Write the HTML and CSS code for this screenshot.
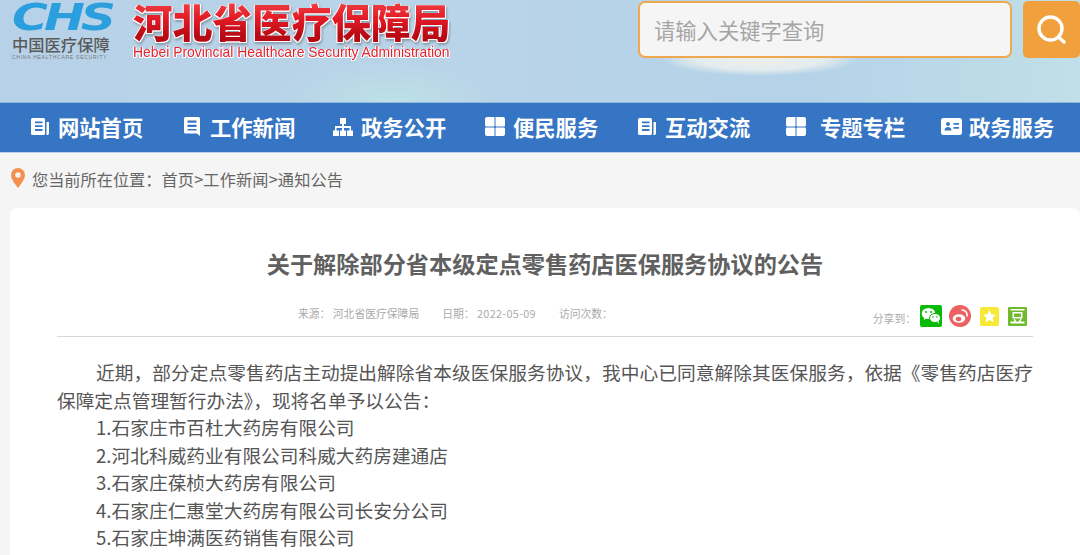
FILE: index.html
```html
<!DOCTYPE html>
<html lang="zh-CN">
<head>
<meta charset="utf-8">
<title>河北省医疗保障局</title>
<link rel="stylesheet" href="styles.css">
</head>
<body>
<header class="header">
  <div class="logo">
    <div class="logo-chs">CHS</div>
    <div class="logo-cn">中国医疗保障</div>
    <div class="logo-en">CHINA HEALTHCARE SECURITY</div>
  </div>
  <div class="brand">
    <div class="brand-cn">河北省医疗保障局</div>
    <div class="brand-en">Hebei Provincial Healthcare Security Administration</div>
  </div>
  <div class="search">
    <div class="search-input">请输入关键字查询</div>
    <div class="search-btn">
      <svg width="34" height="34" viewBox="0 0 34 34"><circle cx="15.500" cy="15.500" r="11.500" fill="none" stroke="#fff" stroke-width="3.400"/><path d="M24 24.500l5 4.500" stroke="#fff" stroke-width="3.400" stroke-linecap="round"/></svg>
    </div>
  </div>
</header>
<nav class="nav">
  <a class="nav-item"><span class="nav-ic"><svg width="18" height="17" viewBox="0 0 18 17"><path fill="#fff" fill-rule="evenodd" d="M1.500 0h11A1.500 1.500 0 0 1 14 1.500v14a1.500 1.500 0 0 1-1.500 1.500h-11A1.500 1.500 0 0 1 0 15.500v-14A1.500 1.500 0 0 1 1.500 0zM4 3.500v1.800h7.500V3.500zm0 3.800v1.800h7.500V7.300zm0 3.800v1.800h7.500v-1.800z"/><path fill="#fff" d="M15.500 4H18v11a2 2 0 0 1-2.500 2z"/></svg></span>网站首页</a>
  <a class="nav-item nav-item-tight"><span class="nav-ic"><svg width="16" height="19" viewBox="0 0 16 19"><path fill="#fff" fill-rule="evenodd" d="M1.500 0h13A1.500 1.500 0 0 1 16 1.500V19l-3-2.500H1.500A1.500 1.500 0 0 1 0 15V1.500A1.500 1.500 0 0 1 1.500 0zM3.500 3.500v2.200h9V3.500zm0 4.300V10h9V7.800zm0 4.200v1.500h9V12z"/></svg></span>工作新闻</a>
  <a class="nav-item nav-item-mid"><span class="nav-ic"><svg width="20" height="18" viewBox="0 0 20 18"><path fill="#fff" d="M7 0h6v6h-2v2h7v4.500h2V18h-6v-5.500h2.500V10h-5.500v2.500h2V18H7v-5.500h2V10H3.500v2.500H6V18H0v-5.500h2V8h7V6H7z"/></svg></span>政务公开</a>
  <a class="nav-item nav-item-mid"><span class="nav-ic"><svg width="20" height="19" viewBox="0 0 20 19"><path fill="#fff" d="M2 0h7.500v8.800a.7.700 0 0 1-.7.700H1.200a1.200 1.200 0 0 1-1.200-1.200V2a2 2 0 0 1 2-2zm8.500 0H18a2 2 0 0 1 2 2v6.300a1.200 1.200 0 0 1-1.200 1.200h-7.600a.7.700 0 0 1-.7-.7zM1.200 10.500h7.600a.7.700 0 0 1 .7.700V19H2a2 2 0 0 1-2-2v-5.300a1.200 1.200 0 0 1 1.200-1.200zm10 0h7.600a1.200 1.200 0 0 1 1.200 1.200V17a2 2 0 0 1-2 2h-7.500v-7.800a.7.700 0 0 1 .7-.7z"/></svg></span>便民服务</a>
  <a class="nav-item"><span class="nav-ic"><svg width="18" height="17" viewBox="0 0 18 17"><path fill="#fff" fill-rule="evenodd" d="M1.500 0h11A1.500 1.500 0 0 1 14 1.500v14a1.500 1.500 0 0 1-1.500 1.500h-11A1.500 1.500 0 0 1 0 15.500v-14A1.500 1.500 0 0 1 1.500 0zM4 3.500v1.800h7.500V3.500zm0 3.800v1.800h7.500V7.300zm0 3.800v1.800h7.500v-1.800z"/><path fill="#fff" d="M15.500 4H18v11a2 2 0 0 1-2.500 2z"/></svg></span>互动交流</a>
  <a class="nav-item nav-item-wide"><span class="nav-ic"><svg width="20" height="19" viewBox="0 0 20 19"><path fill="#fff" d="M2 0h7.500v8.800a.7.700 0 0 1-.7.700H1.200a1.200 1.200 0 0 1-1.200-1.200V2a2 2 0 0 1 2-2zm8.500 0H18a2 2 0 0 1 2 2v6.300a1.200 1.200 0 0 1-1.200 1.200h-7.600a.7.700 0 0 1-.7-.7zM1.200 10.500h7.600a.7.700 0 0 1 .7.700V19H2a2 2 0 0 1-2-2v-5.300a1.200 1.200 0 0 1 1.200-1.200zm10 0h7.600a1.200 1.200 0 0 1 1.200 1.200V17a2 2 0 0 1-2 2h-7.500v-7.800a.7.700 0 0 1 .7-.7z"/></svg></span>专题专栏</a>
  <a class="nav-item nav-item-mid"><span class="nav-ic"><svg width="21" height="17" viewBox="0 0 21 17"><path fill="#fff" fill-rule="evenodd" d="M2.500 0h16A2.500 2.500 0 0 1 21 2.500v12a2.500 2.500 0 0 1-2.500 2.500h-16A2.500 2.500 0 0 1 0 14.500v-12A2.500 2.500 0 0 1 2.500 0zM7 4a2 2 0 1 0 0 4 2 2 0 0 0 0-4zM3.500 12.500h7C10.500 10.300 9 9 7 9s-3.500 1.300-3.500 3.500zM12.500 5v1.800h5.500V5zm0 4v1.800h5.500V9z"/></svg></span>政务服务</a>
</nav>
<div class="crumb">
  <svg class="pin" width="14" height="20" viewBox="0 0 14 20"><path fill="#f58f4d" fill-rule="evenodd" d="M7 0a7 7 0 0 1 7 7c0 4-4 9-7 13C4 16 0 11 0 7a7 7 0 0 1 7-7zm0 4.200a2.800 2.800 0 1 0 0 5.600 2.800 2.800 0 0 0 0-5.600z"/></svg>
  <span>您当前所在位置：</span><span class="crumb-path">首页&gt;工作新闻&gt;通知公告</span>
</div>
<main class="card">
  <h1 class="title">关于解除部分省本级定点零售药店医保服务协议的公告</h1>
  <div class="meta">
    <div class="meta-info">
      <span>来源：&nbsp;河北省医疗保障局</span>
      <span>日期：&nbsp;<span class="meta-num">2022-05-09</span></span>
      <span>访问次数：</span>
    </div>
    <div class="share">
      <span class="share-label">分享到：</span>
      <svg class="share-ic" width="22" height="22" viewBox="0 0 22 22"><rect width="22" height="22" rx="2" fill="#09bb07"/><ellipse cx="8.500" cy="8.500" rx="6.800" ry="5.600" fill="#fff"/><path d="M4.500 12l-.8 3 3.500-2z" fill="#fff"/><ellipse cx="15" cy="13" rx="5.500" ry="4.600" fill="#fff" stroke="#09bb07"/><path d="M17.500 17l1.500 2-.2-3z" fill="#fff"/><circle cx="6" cy="7" r="1" fill="#09bb07"/><circle cx="11" cy="7" r="1" fill="#09bb07"/><circle cx="13" cy="12" r=".8" fill="#09bb07"/><circle cx="17" cy="12" r=".8" fill="#09bb07"/></svg>
      <svg class="share-ic" width="22" height="22" viewBox="0 0 22 22"><circle cx="11" cy="11" r="11" fill="#ec6161"/><ellipse cx="10" cy="13.500" rx="6.300" ry="4.300" fill="#fff"/><ellipse cx="9.500" cy="14" rx="2.800" ry="2.200" fill="#ec6161"/><path d="M13 5a5 5 0 0 1 5 6" fill="none" stroke="#fff" stroke-width="1.500" stroke-linecap="round"/></svg>
      <svg class="share-ic" width="19" height="19" viewBox="0 0 19 19"><rect width="19" height="19" rx="2" fill="#f8e837"/><path fill="#fff" d="M9.500 3l1.900 4.200 4.600.5-3.400 3.100 1 4.500-4.100-2.300-4 2.300.9-4.500L3 7.700l4.600-.5z"/></svg>
      <svg class="share-ic" width="19" height="19" viewBox="0 0 19 19"><rect width="19" height="19" rx="1" fill="#6fb92c"/><path fill="#fff" d="M2.500 2h14v1.600h-14zM4.500 5h10v6.500h-10zm1.600 1.500V10h6.800V6.500zM5.500 12.300l1.500-.4 1 2.700h3l1-2.700 1.500.4-.9 2.300H16.500V16.500h-14v-1.900h4z"/></svg>
    </div>
  </div>
  <article class="body">
    <p>近期，部分定点零售药店主动提出解除省本级医保服务协议，我中心已同意解除其医保服务，依据《零售药店医疗保障定点管理暂行办法》，现将名单予以公告：</p>
    <p>1.石家庄市百杜大药房有限公司</p>
    <p>2.河北科威药业有限公司科威大药房建通店</p>
    <p>3.石家庄葆桢大药房有限公司</p>
    <p>4.石家庄仁惠堂大药房有限公司长安分公司</p>
    <p>5.石家庄坤满医药销售有限公司</p>
  </article>
</main>
</body>
</html>
```
FILE: styles.css
```css
* { box-sizing: border-box; }
html, body { margin: 0; padding: 0; }
body {
  width: 1080px;
  height: 555px;
  overflow: hidden;
  background: #f5f5f5;
  font-family: "Noto Sans CJK SC", "Liberation Sans", sans-serif;
  color: #555;
}
.header {
  height: 103px;
  display: flex;
  align-items: flex-start;
  padding-left: 12px;
  border-bottom: 1px solid #8fb8dc;
  background:
    radial-gradient(ellipse 100px 18px at 760px 58px, rgba(240,242,238,.95) 0, rgba(240,242,238,.8) 65%, rgba(240,242,238,0) 100%),
    radial-gradient(ellipse 110px 40px at 390px 100px, rgba(190,228,230,.8) 0, rgba(190,228,230,0) 100%),
    linear-gradient(90deg, #b7d2e8 0, #b9d3e8 45%, #b4d3e8 75%, #c0dfe8 100%);
}
.logo { width: 98px; padding-top: 2px; color: #5a5a5a; }
.logo-chs {
  height: 32px;
  font: italic 700 37px/32px "DejaVu Sans", sans-serif;
  color: #2b9fdd;
  letter-spacing: -3px;
  transform: scaleX(1.32);
  transform-origin: left center;
  white-space: nowrap;
}
.logo-cn { margin-top: 2px; font-size: 16.300px; line-height: 17px; font-weight: 500; white-space: nowrap; }
.logo-en { margin-top: 1px; font: 5px/7px "Liberation Sans", sans-serif; white-space: nowrap; letter-spacing: .75px; color: #777; }
.brand { width: 318px; margin-left: 23px; }
.brand-cn {
  font-size: 39.700px;
  line-height: 42px;
  font-weight: 900;
  white-space: nowrap;
  background: linear-gradient(180deg, #ee3a40 10%, #e21a25 45%, #b80a14 85%);
  -webkit-background-clip: text;
  background-clip: text;
  color: transparent;
  filter: drop-shadow(1px 0 0 #fff) drop-shadow(-1px 0 0 #fff) drop-shadow(0 1px 0 #fff) drop-shadow(1px 2px 1px rgba(60,60,60,.35));
}
.brand-en {
  margin-top: 2px;
  font: 400 13.900px/16px "Liberation Sans", sans-serif;
  white-space: nowrap;
  color: #e3222e;
  filter: drop-shadow(1px 0 0 #fff) drop-shadow(-1px 0 0 #fff) drop-shadow(0 1px 0 #fff);
}
.search { margin-left: auto; display: flex; gap: 11px; margin-top: 1px; }
.search-input {
  width: 374px;
  height: 57px;
  background: #f5f5f5;
  border: 2px solid #f0a850;
  border-radius: 7px;
  padding-left: 14px;
  font-size: 21.300px;
  line-height: 53px;
  color: #a5a5a5;
}
.search-btn {
  width: 57px;
  height: 57px;
  background: #f0a03c;
  border-radius: 5px;
  display: flex;
  align-items: center;
  justify-content: center;
}
.nav {
  height: 50px;
  background: #3675c3;
  border-bottom: 1px solid #b9d0e8;
  display: grid;
  grid-template-columns: 153px 149px 152px 153px 148px 155px 139px;
  padding-left: 31px;
  padding-bottom: 2px;
  color: #fff;
  font-size: 21.300px;
  font-weight: 700;
}
.nav-item { display: flex; align-items: center; white-space: nowrap; }
.nav-ic { width: 27px; display: flex; align-items: center; }
.nav-item-tight .nav-ic { width: 26px; }
.nav-item-mid .nav-ic { width: 28px; }
.nav-item-wide .nav-ic { width: 34px; }
.crumb {
  height: 55px;
  display: flex;
  align-items: flex-start;
  padding: 15px 0 0 11px;
  font-size: 16.200px;
  line-height: 23px;
  color: #666;
}
.pin { margin: 0 7px 0 0; }
.crumb-path { letter-spacing: .15px; }
.card {
  margin-left: 10px;
  height: 360px;
  background: #fff;
  border-radius: 7px 7px 0 0;
  padding: 0 47px;
}
.title {
  margin: 0;
  padding-top: 39px;
  text-align: center;
  font-size: 23.200px;
  line-height: 32px;
  font-weight: 700;
  color: #606060;
}
.meta {
  margin-top: 19px;
  height: 39px;
  padding-top: 7px;
  border-bottom: 1px solid #d8d8d8;
  display: flex;
  justify-content: flex-end;
}
.meta-info {
  flex: 1;
  display: flex;
  gap: 23px;
  padding-left: 241px;
  font-size: 10.800px;
  line-height: 16px;
  color: #aaa;
}
.meta-num { letter-spacing: .35px; }
.share { display: flex; align-items: flex-start; margin-right: 6px; color: #aaa; font-size: 10.800px; }
.share-label { margin-top: 5px; margin-right: 4px; line-height: 16px; }
.share-ic { margin-left: 7px; }
.share-ic:nth-child(2) { margin-left: 0; }
.share-ic:nth-child(4), .share-ic:nth-child(5) { margin-top: 2px; margin-left: 9px; }
.body { padding-top: 21px; font-size: 18.700px; line-height: 27.500px; color: #555; text-align: justify; }
.body p { margin: 0; text-indent: 39px; }
```
